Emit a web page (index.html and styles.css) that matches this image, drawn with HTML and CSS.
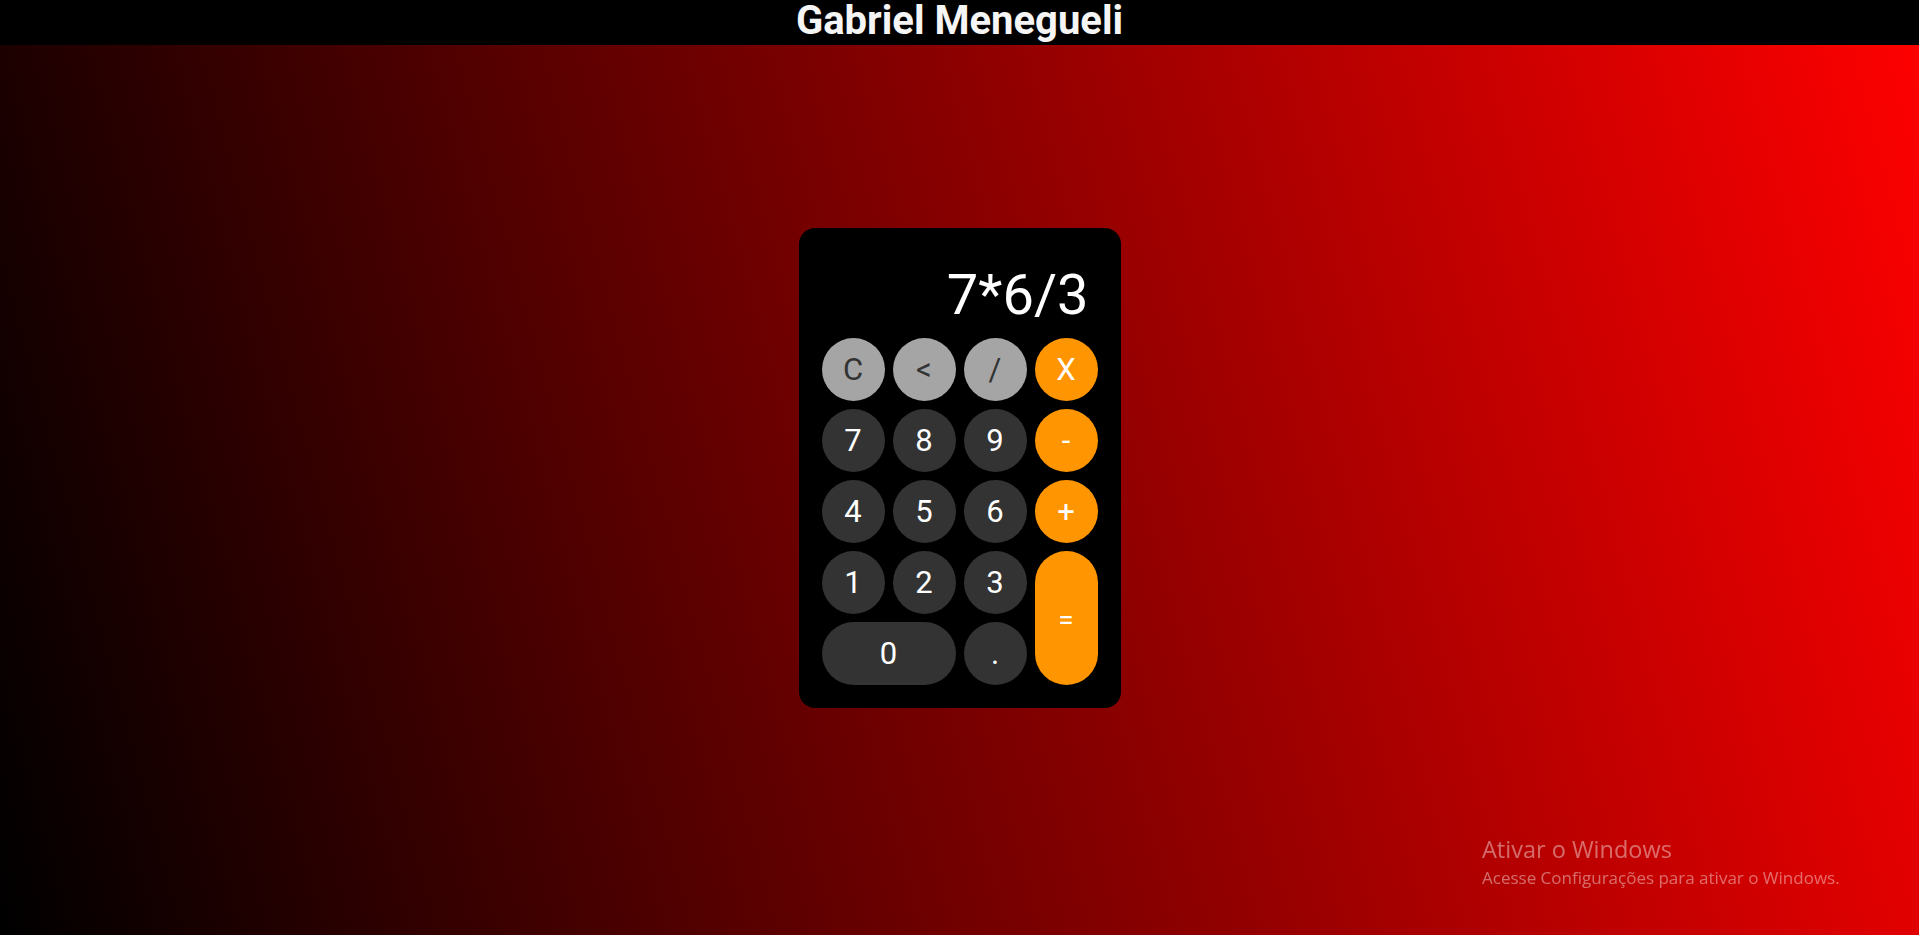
FILE: index.html
```html
<!DOCTYPE html>
<html lang="pt-BR">
<head>
<meta charset="utf-8">
<title>Calculadora</title>
<link rel="stylesheet" href="styles.css">
</head>
<body>
<header class="topbar">
  <h1 class="title">Gabriel Menegueli</h1>
</header>
<main class="stage">
  <div class="calc">
    <div class="display">7*6/3</div>
    <div class="keys">
      <button class="key key-fn">C</button>
      <button class="key key-fn">&lt;</button>
      <button class="key key-fn">/</button>
      <button class="key key-op">X</button>
      <button class="key">7</button>
      <button class="key">8</button>
      <button class="key">9</button>
      <button class="key key-op">-</button>
      <button class="key">4</button>
      <button class="key">5</button>
      <button class="key">6</button>
      <button class="key key-op">+</button>
      <button class="key">1</button>
      <button class="key">2</button>
      <button class="key">3</button>
      <button class="key key-op key-eq">=</button>
      <button class="key key-zero">0</button>
      <button class="key">.</button>
    </div>
  </div>
</main>
<div class="watermark">
  <div class="wm-title">Ativar o Windows</div>
  <div class="wm-sub">Acesse Configurações para ativar o Windows.</div>
</div>
</body>
</html>
```
FILE: styles.css
```css
html, body {
  margin: 0;
  padding: 0;
}
body {
  height: 100vh;
  display: grid;
  grid-template-rows: 45px 1fr;
  background: linear-gradient(75deg, #000000, #ff0000);
  font-family: Roboto, "Liberation Sans", sans-serif;
  overflow: hidden;
}
.topbar {
  background: #000;
  display: flex;
  justify-content: center;
  align-items: flex-start;
}
.title {
  margin: 0;
  color: #f5f5f5;
  font-size: 40px;
  font-weight: 700;
  line-height: 42px;
}
.stage {
  display: flex;
  align-items: center;
  justify-content: center;
  padding-bottom: 45px;
}
.calc {
  width: 322px;
  box-sizing: border-box;
  padding: 23px;
  background: #000;
  border-radius: 16px;
}
.display {
  height: 87px;
  box-sizing: border-box;
  padding: 11px 9px 0 0;
  text-align: right;
  color: #fff;
  font-size: 56px;
  line-height: 66px;
}
.keys {
  display: grid;
  grid-template-columns: repeat(4, 63px);
  grid-auto-rows: 63px;
  gap: 8px;
}
.key {
  border: none;
  margin: 0;
  padding: 0;
  border-radius: 32px;
  background: #333333;
  color: #fff;
  font-family: Roboto, "Liberation Sans", sans-serif;
  font-size: 31px;
}
.key-fn {
  background: #a5a5a5;
  color: #333333;
}
.key-op {
  background: #ff9500;
  color: #fff;
}
.key-eq {
  grid-row: span 2;
  font-size: 28px;
  padding-top: 4px;
}
.key-zero {
  grid-column: span 2;
}
.watermark {
  position: fixed;
  left: 1482px;
  top: 834px;
  color: rgba(255, 255, 255, 0.42);
  font-family: "Open Sans", "Noto Sans", sans-serif;
}
.wm-title {
  font-size: 23.5px;
  line-height: 31px;
}
.wm-sub {
  font-size: 17px;
  line-height: 26px;
}
```
